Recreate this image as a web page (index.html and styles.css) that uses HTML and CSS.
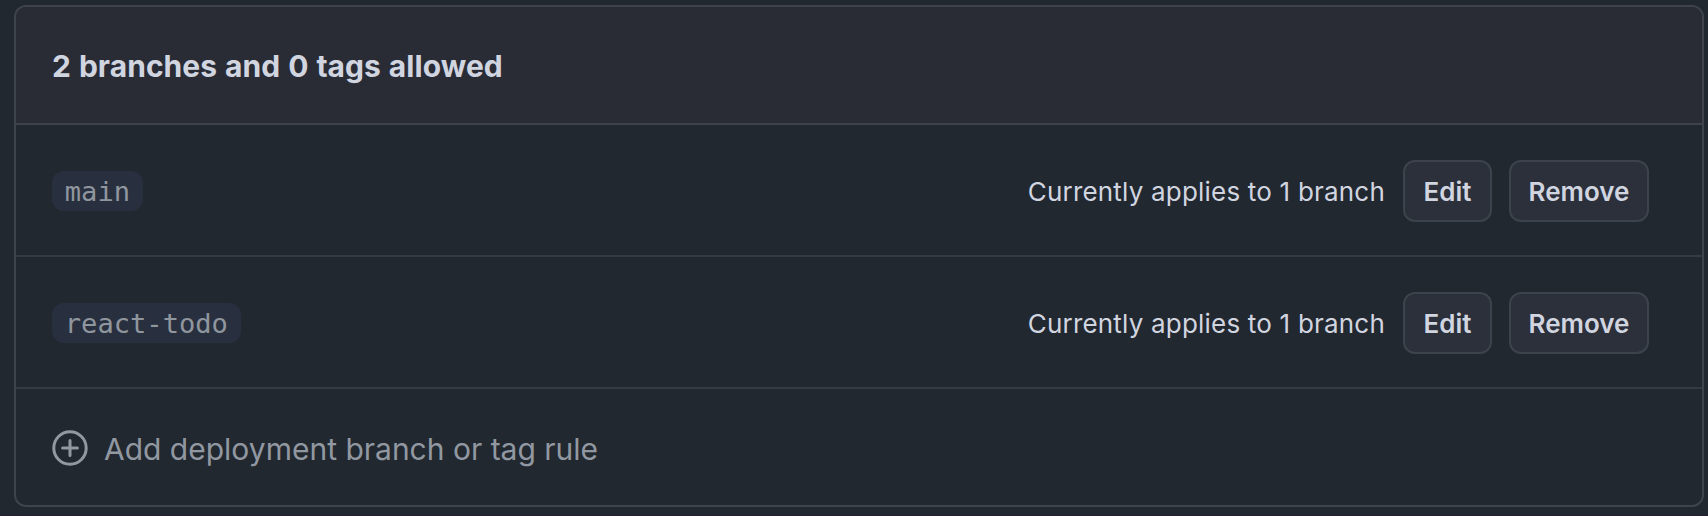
FILE: index.html
```html
<!DOCTYPE html>
<html lang="en">
<head>
<meta charset="utf-8">
<title>Deployment branches and tags</title>
<link rel="stylesheet" href="styles.css">
</head>
<body>
<section class="box">
  <header class="box-header"><h2 class="box-title">2 branches and 0 tags allowed</h2></header>
  <div class="box-row">
    <code class="branch-name">main</code>
    <span class="applies">Currently applies to 1 branch</span>
    <button class="btn btn-edit">Edit</button>
    <button class="btn btn-remove">Remove</button>
  </div>
  <div class="box-row">
    <code class="branch-name">react-todo</code>
    <span class="applies">Currently applies to 1 branch</span>
    <button class="btn btn-edit">Edit</button>
    <button class="btn btn-remove">Remove</button>
  </div>
  <a class="add-rule">
    <svg class="add-icon" viewBox="0 0 36 36" fill="none" stroke="currentColor" stroke-width="3" stroke-linecap="round"><circle cx="18" cy="18" r="16.2"/><path d="M18 10.6v14.8M10.6 18h14.8"/></svg>
    <span class="add-label">Add deployment branch or tag rule</span>
  </a>
</section>
</body>
</html>
```

FILE: styles.css
```css
* { box-sizing: border-box; }
body {
  margin: 0;
  height: 516px;
  padding: 5px 4px 0 14px;
  overflow: hidden;
  background: #22282f;
  border-bottom: 1px solid #241f2d;
  color: #d1d5e0;
  font-family: Inter, "Liberation Sans", sans-serif;
}
.box {
  height: 502px;
  border: 2px solid #3f444c;
  border-radius: 12px;
  background: #22282f;
  overflow: hidden;
}
.box-header {
  display: flex;
  align-items: center;
  height: 118px;
  padding: 2px 36px 0;
  border-bottom: 2px solid #3f444c;
  background: #292c35;
}
.box-title {
  margin: 0;
  font-size: 30px;
  font-weight: 700;
  letter-spacing: 0.05px;
  word-spacing: 0.8px;
}
.box-row {
  display: flex;
  align-items: center;
  height: 132px;
  padding: 2px 53px 0 36px;
  border-bottom: 2px solid #353b43;
}
.branch-name {
  height: 40px;
  padding: 0 12.8px;
  margin-right: auto;
  border-radius: 12px;
  background: #283040;
  color: #90969e;
  font: 27.1px/41px "DejaVu Sans Mono", monospace;
}
.applies {
  margin-right: 18px;
  padding-top: 1px;
  font-size: 26px;
  line-height: 32px;
  letter-spacing: 0.2px;
}
.btn {
  height: 62px;
  padding: 2px 0 0;
  border: 2px solid #3d434c;
  border-radius: 12px;
  background: #2b303a;
  color: #d1d5e0;
  font: 600 26px/56px Inter, "Liberation Sans", sans-serif;
}
.btn-edit { width: 89px; margin-right: 17px; }
.btn-remove { width: 140px; }
.add-rule {
  display: flex;
  align-items: center;
  gap: 16px;
  height: 116px;
  padding: 2px 36px 0;
  color: #9198a1;
}
.add-icon { width: 36px; height: 36px; }
.add-label { padding-top: 1px; font-size: 30px; }
```
